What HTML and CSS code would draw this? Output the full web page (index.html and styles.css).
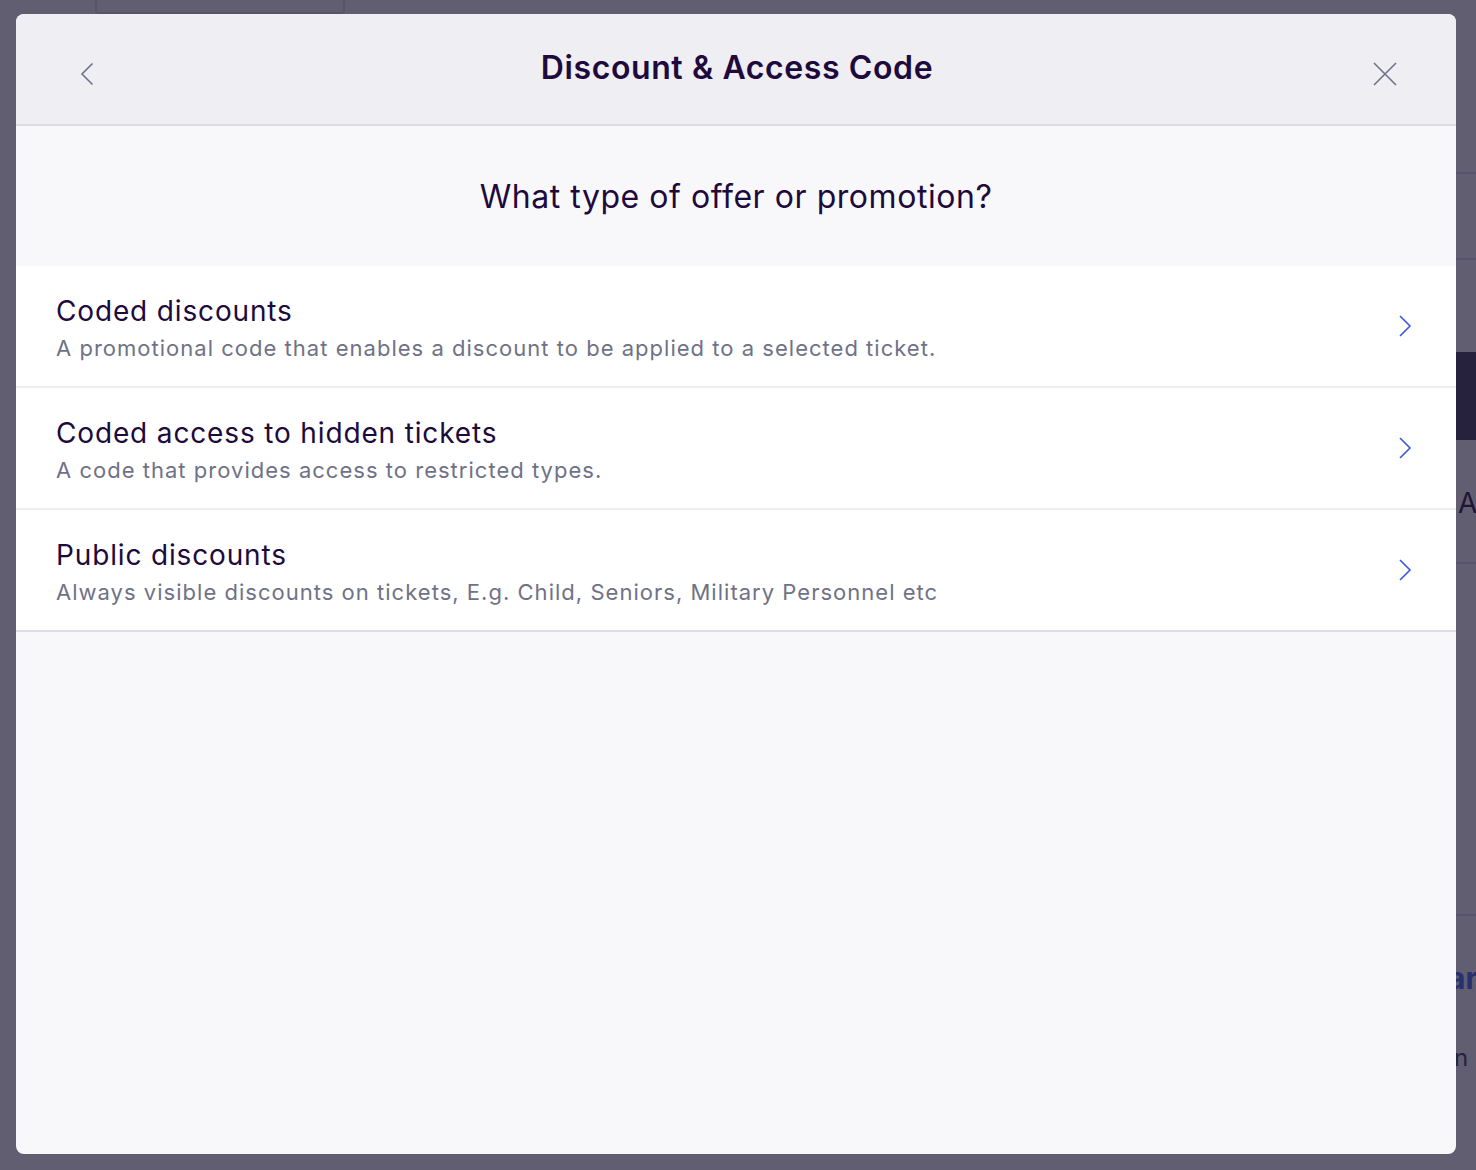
FILE: index.html
```
<!DOCTYPE html>
<html>
<head>
<meta charset="utf-8">
<link rel="stylesheet" href="styles.css">
</head>
<body>
<div class="page">
  <div class="bg-box"></div>
  <div class="bg-right">
    <div class="bg-line l1"></div>
    <div class="bg-line l2"></div>
    <div class="bg-dark"></div>
    <div class="bg-a">A</div>
    <div class="bg-line l3"></div>
    <div class="bg-line l4"></div>
    <div class="bg-an">an</div>
    <div class="bg-n">n</div>
  </div>
  <div class="overlay"></div>
  <div class="modal">
    <header class="modal-header">
      <button class="icon-btn back" aria-label="Back">
        <svg width="24" height="24" viewBox="0 0 24 24"><path d="M15.5 1.5 L5 12 L15.5 22.5" fill="none" stroke="#6f7287" stroke-width="1.6"/></svg>
      </button>
      <h1 class="modal-title">Discount &amp; Access Code</h1>
      <button class="icon-btn close" aria-label="Close">
        <svg width="24" height="24" viewBox="0 0 24 24"><path d="M1 1 L23 23 M23 1 L1 23" fill="none" stroke="#6f7287" stroke-width="1.6"/></svg>
      </button>
    </header>
    <div class="modal-body">
      <h2 class="question">What type of offer or promotion?</h2>
      <ul class="options">
        <li class="option">
          <div class="option-text">
            <div class="option-title">Coded discounts</div>
            <div class="option-desc">A promotional code that enables a discount to be applied to a selected ticket.</div>
          </div>
          <svg class="chev" width="14" height="22" viewBox="0 0 14 22"><path d="M2 1 L12 11 L2 21" fill="none" stroke="#3659e3" stroke-width="1.6"/></svg>
        </li>
        <li class="option">
          <div class="option-text">
            <div class="option-title">Coded access to hidden tickets</div>
            <div class="option-desc">A code that provides access to restricted types.</div>
          </div>
          <svg class="chev" width="14" height="22" viewBox="0 0 14 22"><path d="M2 1 L12 11 L2 21" fill="none" stroke="#3659e3" stroke-width="1.6"/></svg>
        </li>
        <li class="option">
          <div class="option-text">
            <div class="option-title">Public discounts</div>
            <div class="option-desc">Always visible discounts on tickets, E.g. Child, Seniors, Military Personnel etc</div>
          </div>
          <svg class="chev" width="14" height="22" viewBox="0 0 14 22"><path d="M2 1 L12 11 L2 21" fill="none" stroke="#3659e3" stroke-width="1.6"/></svg>
        </li>
      </ul>
    </div>
  </div>
</div>
</body>
</html>
```
FILE: styles.css
```
* { box-sizing: border-box; }
html, body { margin: 0; padding: 0; }
body {
  width: 1476px;
  height: 1170px;
  overflow: hidden;
  font-family: Inter, "Open Sans", sans-serif;
  background: #ffffff;
}
.page {
  position: relative;
  width: 1476px;
  height: 1170px;
  overflow: hidden;
  padding: 14px 20px 16px 16px;
}
.bg-box {
  position: absolute;
  left: 95px; top: -10px;
  width: 250px; height: 24px;
  border: 2px solid #dcdbe2;
  border-radius: 4px;
  background: #ffffff;
}
.bg-right {
  position: absolute;
  left: 1456px; top: 0;
  width: 20px; height: 1170px;
  overflow: hidden;
  background: #ffffff;
}
.bg-line { position: absolute; left: 0; width: 20px; height: 2px; background: #dcdbe2; }
.bg-line.l1 { top: 172px; }
.bg-line.l2 { top: 258px; }
.bg-line.l3 { top: 562px; }
.bg-line.l4 { top: 914px; }
.bg-dark { position: absolute; left: 0; top: 352px; width: 20px; height: 88px; background: #3a3650; }
.bg-a { position: absolute; left: 2px; top: 486px; font-size: 28px; color: #1e0a3c; }
.bg-an { position: absolute; left: -8px; top: 960px; font-size: 30px; font-weight: 700; color: #3d64ff; white-space: nowrap; }
.bg-n { position: absolute; left: -2px; top: 1043px; font-size: 24px; color: #39364f; }
.overlay {
  position: absolute;
  inset: 0;
  background: rgba(30, 26, 52, 0.7);
}
.modal {
  position: relative;
  width: 1440px;
  height: 1140px;
  background: #f8f8fa;
  border-radius: 8px;
  overflow: hidden;
  display: flex;
  flex-direction: column;
}
.modal-header {
  height: 112px;
  background: #efeef3;
  border-bottom: 2px solid #dddce3;
  display: flex;
  align-items: center;
  justify-content: space-between;
  padding: 0 59px 0 61px;
  flex: none;
}
.icon-btn {
  background: none;
  border: 0;
  padding: 0;
  width: 24px;
  height: 24px;
  display: flex;
  margin-top: 10px;
}
.modal-title {
  margin: 0;
  font-size: 32px;
  font-weight: 600;
  color: #1e0a3c;
  letter-spacing: 0.6px;
  margin-top: -4px;
}
.modal-body { flex: 1; }
.question {
  margin: 0;
  height: 140px;
  display: flex;
  align-items: center;
  justify-content: center;
  font-size: 32px;
  font-weight: 400;
  color: #1e0a3c;
  letter-spacing: 0.55px;
  padding-top: 1px;
}
.options {
  list-style: none;
  margin: 0;
  padding: 0;
  background: #ffffff;
}
.option {
  height: 122px;
  border-bottom: 2px solid #eeedf2;
  display: flex;
  align-items: center;
  justify-content: space-between;
  padding: 5px 44px 0 40px;
}
.option:last-child { border-bottom-color: #dddce3; }
.option-text { display: flex; flex-direction: column; }
.option-title {
  font-size: 28px;
  color: #1e0a3c;
  letter-spacing: 0.85px;
  line-height: 36px;
}
.option-desc {
  font-size: 22px;
  color: #6f7287;
  letter-spacing: 1.02px;
  line-height: 32px;
  margin-top: 3px;
}
.chev { flex: none; margin-top: -5px; }
```
